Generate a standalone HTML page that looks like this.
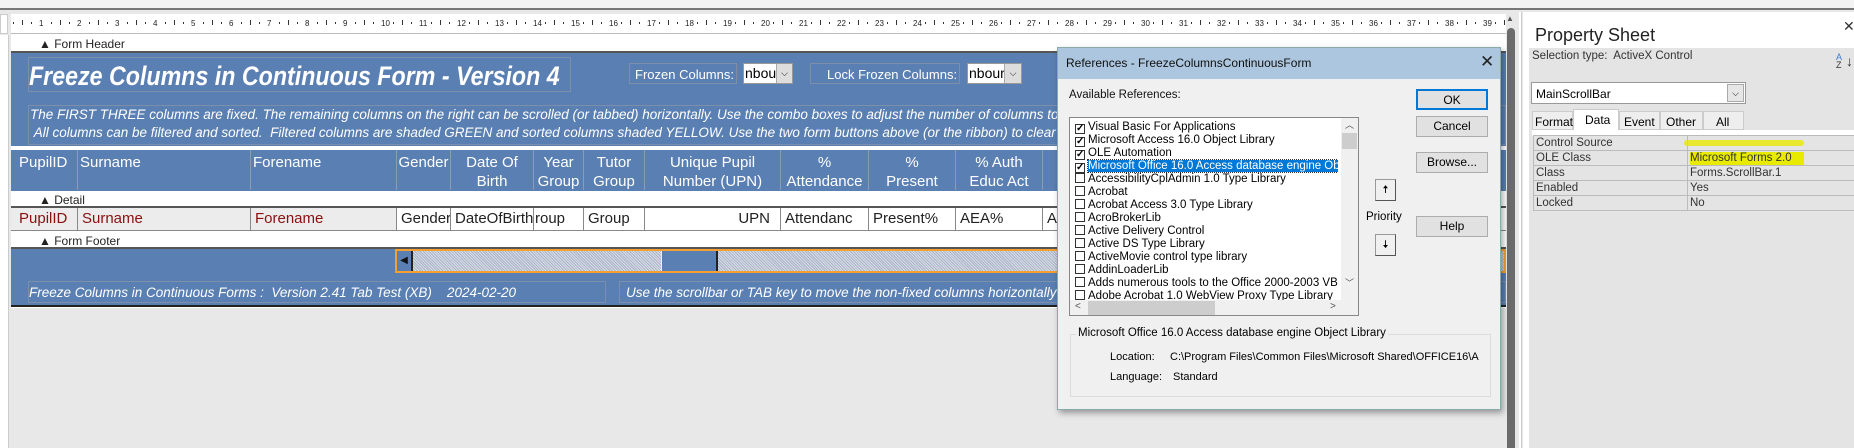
<!DOCTYPE html>
<html><head><meta charset="utf-8"><style>
*{margin:0;padding:0;box-sizing:border-box}
body{width:1854px;height:448px;overflow:hidden;background:#e8e8e8;font-family:"Liberation Sans",sans-serif;position:relative}
.a{position:absolute}
.blue{background:#5a7fb2}
.bar{background:#fff;border-bottom:2px solid #555;font-size:12px;color:#222;padding:3px 0 0 28px}
.ch{position:absolute;top:0;height:40px;border-right:1px solid #8a9bb5;color:#fff;font-size:15px;text-align:center;line-height:19px;padding-top:3px}
.dc{position:absolute;top:0;height:22px;border-right:1px solid #888;font-size:15px;line-height:21px;padding-left:4px;background:#fff;color:#222;white-space:nowrap;overflow:hidden}
.fx{background:#ececec;color:#8b1010}
.it{font-style:italic;color:#fff}
.btn{position:absolute;left:1416px;width:72px;height:21px;background:#e1e1e1;border:1px solid #adadad;font-size:12px;text-align:center;line-height:19px;color:#000}
.li{height:13px;font-size:11.5px;line-height:13px;white-space:nowrap;padding-left:2px;position:relative}
.cb{display:inline-block;width:10px;height:10px;border:1px solid #333;vertical-align:-1px;margin-right:3px;font-size:10px;line-height:8px;text-align:center;font-weight:bold;background:#fff}
.pr td{border:1px solid #bbb;font-size:11.5px;height:15px;padding-left:2px;color:#333}
.lb{white-space:nowrap}
</style></head><body>
<div class="a" style="left:0;top:0;width:1854px;height:10px;background:#f3f3f3;border-bottom:2px solid #777"></div>
<div class="a" style="left:0;top:14px;width:8px;height:20px;background:#fff;border:1px solid #ccc"></div>
<div class="a" style="left:11px;top:14px;width:1495px;height:20px;background:#fff;border-bottom:1px solid #bbb;font-size:8px;color:#222;white-space:nowrap;overflow:hidden" id="r"></div>
<div class="a" style="left:0;top:35px;width:9px;height:413px;background:#fff;border-right:1px solid #ccc"></div>
<div class="a" style="left:11px;top:34px;width:1495px;height:274px;background:#fff"></div>
<div class="a bar" style="left:11px;top:34px;width:1495px;height:19px">▲ Form Header</div>
<div class="a blue" style="left:11px;top:53px;width:1495px;height:93px"></div>
<div class="a" style="left:28px;top:57px;width:543px;height:35px;border:1px solid #7d8fa8"></div>
<div class="a" style="left:29px;top:58px;font:bold italic 27px 'Liberation Sans',sans-serif;color:#fff;white-space:nowrap;transform:scaleX(0.86);transform-origin:0 0;padding-top:3px">Freeze Columns in Continuous Form - Version 4</div>
<div class="a lb" style="left:629px;top:63px;width:108px;height:21px;border:1px solid #7d8fa8;color:#fff;font-size:13px;padding:3px 0 0 5px">Frozen Columns:</div>
<div class="a" style="left:743px;top:63px;width:50px;height:21px;background:#fff;border:1px solid #999;font-size:14px;padding:1px 0 0 1px;overflow:hidden">nbour<span class="a" style="right:0;top:0;width:16px;height:19px;background:#ddd;border-left:1px solid #aaa;font-size:9px;text-align:center;line-height:18px">⌵</span></div>
<div class="a lb" style="left:810px;top:63px;width:150px;height:21px;border:1px solid #7d8fa8;color:#fff;font-size:13px;padding:3px 0 0 16px">Lock Frozen Columns:</div>
<div class="a" style="left:967px;top:63px;width:55px;height:21px;background:#fff;border:1px solid #999;font-size:14px;padding:1px 0 0 1px;overflow:hidden">nbour<span class="a" style="right:0;top:0;width:17px;height:19px;background:#ddd;border-left:1px solid #aaa;font-size:9px;text-align:center;line-height:18px">⌵</span></div>
<div class="a it" style="left:28px;top:105px;width:1478px;height:40px;border:1px solid #7d8fa8;font-size:13.5px;line-height:18px;padding:0 0 0 1px;white-space:nowrap;overflow:hidden">The FIRST THREE columns are fixed. The remaining columns on the right can be scrolled (or tabbed) horizontally. Use the combo boxes to adjust the number of columns to<br>&nbsp;All columns can be filtered and sorted.&nbsp; Filtered columns are shaded GREEN and sorted columns shaded YELLOW. Use the two form buttons above (or the ribbon) to clear t</div>
<div class="a" style="left:11px;top:146px;width:1495px;height:4px;background:#fff"></div>
<div class="a blue" style="left:11px;top:150px;width:1495px;height:41px">
<div class="ch" style="left:0;width:67px;text-align:left;padding-left:8px">PupilID</div>
<div class="ch" style="left:67px;width:173px;text-align:left;padding-left:2px">Surname</div>
<div class="ch" style="left:240px;width:146px;text-align:left;padding-left:2px">Forename</div>
<div class="ch" style="left:386px;width:54px">Gender</div>
<div class="ch" style="left:440px;width:83px">Date Of<br>Birth</div>
<div class="ch" style="left:523px;width:50px">Year<br>Group</div>
<div class="ch" style="left:573px;width:61px">Tutor<br>Group</div>
<div class="ch" style="left:634px;width:136px">Unique Pupil<br>Number (UPN)</div>
<div class="ch" style="left:770px;width:88px">%<br>Attendance</div>
<div class="ch" style="left:858px;width:87px">%<br>Present</div>
<div class="ch" style="left:945px;width:87px">% Auth<br>Educ Act</div>
</div>
<div class="a bar" style="left:11px;top:191px;width:1495px;height:17px;padding-top:2px">▲ Detail</div>
<div class="a" style="left:11px;top:208px;width:1495px;height:23px;border-bottom:1px solid #888;background:#fff">
<div class="dc fx" style="left:0;width:67px;padding-left:8px">PupilID</div>
<div class="dc fx" style="left:67px;width:173px">Surname</div>
<div class="dc fx" style="left:240px;width:146px">Forename</div>
<div class="dc" style="left:386px;width:54px">Gender</div>
<div class="dc" style="left:440px;width:83px">DateOfBirth</div>
<div class="dc" style="left:523px;width:50px;padding-left:1px">roup</div>
<div class="dc" style="left:573px;width:61px">Group</div>
<div class="dc" style="left:634px;width:136px;text-align:right;padding-right:10px">UPN</div>
<div class="dc" style="left:770px;width:88px">Attendanc</div>
<div class="dc" style="left:858px;width:87px">Present%</div>
<div class="dc" style="left:945px;width:87px">AEA%</div>
<div class="dc" style="left:1032px;width:40px">Au</div>
</div>
<div class="a bar" style="left:11px;top:232px;width:1495px;height:17px;padding-top:2px">▲ Form Footer</div>
<div class="a blue" style="left:11px;top:249px;width:1495px;height:58px;border-bottom:2px solid #222"></div>
<div class="a" style="left:395px;top:249px;width:1111px;height:24px;border:2px solid #f5a030;background:repeating-linear-gradient(45deg,#a8b4c8 0 1px,#d8dde6 1px 2px)"></div>
<div class="a" style="left:397px;top:251px;width:16px;height:20px;background:#5a7fb2;border-right:2px solid #222;color:#111;font-size:10px;line-height:20px;text-align:center">◀</div>
<div class="a" style="left:661px;top:251px;width:57px;height:20px;background:#5a7fb2;border-left:1px solid #eee;border-right:2px solid #222"></div>
<div class="a it" style="left:28px;top:281px;width:578px;height:22px;border:1px solid #7d8fa8;font-size:13.5px;padding-top:3px;white-space:nowrap">Freeze Columns in Continuous Forms :&nbsp; Version 2.41 Tab Test (XB)&nbsp;&nbsp;&nbsp; 2024-02-20</div>
<div class="a it" style="left:619px;top:281px;width:887px;height:22px;border:1px solid #7d8fa8;font-size:13.5px;padding:3px 0 0 6px;white-space:nowrap">Use the scrollbar or TAB key to move the non-fixed columns horizontally</div>
<div class="a" style="left:1506px;top:12px;width:12px;height:436px;background:#e8e8e8"></div>
<div class="a" style="left:1507px;top:28px;width:8px;height:420px;background:#6b6b6b;border-radius:4px 4px 0 0"></div>
<div class="a" style="left:1506px;top:14px;font-size:8px;color:#555">▲</div>
<div class="a" style="left:1519px;top:12px;width:3px;height:436px;background:#fff;border-right:1px solid #ccc"></div>
<div class="a" style="left:1523px;top:12px;width:331px;height:436px;background:#fff"></div>
<div class="a" style="left:1535px;top:25px;font-size:18px;color:#222">Property Sheet</div>
<div class="a" style="left:1843px;top:18px;font-size:14px;color:#333">✕</div>
<div class="a" style="left:1529px;top:48px;width:325px;height:400px;background:#e4e4e4"></div>
<div class="a" style="left:1532px;top:50px;font-size:11.5px;color:#333">Selection type:&nbsp; ActiveX Control</div>
<div class="a" style="left:1836px;top:53px;font-size:9px;line-height:8px;color:#333"><span style="color:#3a7bd5">A</span><br>Z</div>
<div class="a" style="left:1846px;top:53px;font-size:14px;color:#333">↓</div>
<div class="a" style="left:1531px;top:82px;width:215px;height:22px;background:#fff;border:1px solid #999;font-size:12px;padding:4px 0 0 4px">MainScrollBar<span class="a" style="right:1px;top:1px;width:17px;height:18px;background:#e6e6e6;border:1px solid #aaa;font-size:9px;text-align:center;line-height:16px">⌵</span></div>
<div class="a" style="left:1532px;top:111px;width:41px;height:19px;background:#eee;border:1px solid #ccc;font-size:12px;padding:3px 0 0 2px">Format</div>
<div class="a" style="left:1573px;top:109px;width:46px;height:21px;background:#fff;border:1px solid #ccc;border-bottom:none;font-size:12px;padding:3px 0 0 11px">Data</div>
<div class="a" style="left:1619px;top:111px;width:41px;height:19px;background:#eee;border:1px solid #ccc;font-size:12px;padding:3px 0 0 4px">Event</div>
<div class="a" style="left:1660px;top:111px;width:43px;height:19px;background:#eee;border:1px solid #ccc;font-size:12px;padding:3px 0 0 5px">Other</div>
<div class="a" style="left:1703px;top:111px;width:41px;height:19px;background:#eee;border:1px solid #ccc;font-size:12px;padding:3px 0 0 12px">All</div>
<div class="a" style="left:1532px;top:130px;width:322px;height:6px;background:#fff"></div>
<table class="a pr" style="left:1533px;top:135px;width:325px;border-collapse:collapse;background:#e4e4e4">
<tr><td style="width:154px">Control Source</td><td></td></tr>
<tr><td>OLE Class</td><td><span style="background:#e8ea00;padding:0 12px 1px 0">Microsoft Forms 2.0</span></td></tr>
<tr><td>Class</td><td>Forms.ScrollBar.1</td></tr>
<tr><td>Enabled</td><td>Yes</td></tr>
<tr><td>Locked</td><td>No</td></tr>
</table>
<div class="a" style="left:1684px;top:140px;width:120px;height:6px;background:#e8ea00;border-radius:3px;opacity:.8"></div>
<div class="a" style="left:1057px;top:47px;width:444px;height:363px;background:#f0f0f0;border:1px solid #8aa;box-shadow:2px 3px 6px rgba(0,0,0,.35)"></div>
<div class="a" style="left:1058px;top:48px;width:442px;height:31px;background:#abc6de"></div>
<div class="a" style="left:1066px;top:56px;font-size:12px;color:#111">References - FreezeColumnsContinuousForm</div>
<div class="a" style="left:1480px;top:52px;font-size:17px;color:#222">✕</div>
<div class="a" style="left:1069px;top:89px;font-size:11.5px;color:#111">Available References:</div>
<div class="a" style="left:1069px;top:117px;width:290px;height:199px;background:#fff;border:1px solid #888;overflow:hidden">
<div style="padding:3px 0 0 3px;width:268px;overflow:hidden">
<div class="li"><span class="cb">✓</span>Visual Basic For Applications</div>
<div class="li"><span class="cb">✓</span>Microsoft Access 16.0 Object Library</div>
<div class="li"><span class="cb">✓</span>OLE Automation</div>
<div class="li"><span class="cb">✓</span><span style="background:#0078d7;color:#fff;outline:1px dotted #333;padding-right:2px">Microsoft Office 16.0 Access database engine Objec</span></div>
<div class="li"><span class="cb"></span>AccessibilityCplAdmin 1.0 Type Library</div>
<div class="li"><span class="cb"></span>Acrobat</div>
<div class="li"><span class="cb"></span>Acrobat Access 3.0 Type Library</div>
<div class="li"><span class="cb"></span>AcroBrokerLib</div>
<div class="li"><span class="cb"></span>Active Delivery Control</div>
<div class="li"><span class="cb"></span>Active DS Type Library</div>
<div class="li"><span class="cb"></span>ActiveMovie control type library</div>
<div class="li"><span class="cb"></span>AddinLoaderLib</div>
<div class="li"><span class="cb"></span>Adds numerous tools to the Office 2000-2003 VBE</div>
<div class="li"><span class="cb"></span>Adobe Acrobat 1.0 WebView Proxy Type Library</div>
</div>
<div class="a" style="left:271px;top:0;width:17px;height:182px;background:#f0f0f0;font-size:9px;color:#555;text-align:center">︿<div style="height:16px;background:#cdcdcd;margin:2px 1px"></div><div style="margin-top:127px">﹀</div></div>
<div class="a" style="left:0;top:182px;width:288px;height:16px;background:#f0f0f0;font-size:10px;color:#555"><span class="a" style="left:5px;top:1px">&lt;</span><div class="a" style="left:18px;top:1px;width:127px;height:14px;background:#cdcdcd"></div><span class="a" style="left:260px;top:1px">&gt;</span></div>
</div>
<div class="btn" style="top:89px;border:2px solid #0078d7">OK</div>
<div class="btn" style="top:116px">Cancel</div>
<div class="btn" style="top:152px">Browse...</div>
<div class="btn" style="top:216px">Help</div>
<div class="a" style="left:1375px;top:179px;width:21px;height:22px;background:#f0f0f0;border:1px solid #999;border-right-color:#555;border-bottom-color:#555;font-size:11px;text-align:center;line-height:20px">🠅</div>
<div class="a" style="left:1366px;top:211px;font-size:11.5px">Priority</div>
<div class="a" style="left:1375px;top:234px;width:21px;height:22px;background:#f0f0f0;border:1px solid #999;border-right-color:#555;border-bottom-color:#555;font-size:11px;text-align:center;line-height:20px">🠇</div>
<div class="a" style="left:1070px;top:334px;width:421px;height:63px;border:1px solid #dcdcdc"></div>
<div class="a" style="left:1076px;top:327px;font-size:11.5px;background:#f0f0f0;padding:0 2px">Microsoft Office 16.0 Access database engine Object Library</div>
<div class="a" style="left:1110px;top:351px;font-size:11px">Location:</div>
<div class="a" style="left:1170px;top:351px;font-size:11px;white-space:nowrap">C:\Program Files\Common Files\Microsoft Shared\OFFICE16\A</div>
<div class="a" style="left:1110px;top:371px;font-size:11px">Language:</div>
<div class="a" style="left:1173px;top:371px;font-size:11px">Standard</div>
<script>
var r=document.getElementById('r'),h='';
for(var i=0;i<40;i++){var x=i*38-8;
if(i>0)h+='<span class="a" style="left:'+(x-2)+'px;top:5px">'+i+'</span>';
h+='<span class="a" style="left:'+(x+10)+'px;top:8px;width:1px;height:2px;background:#333"></span><span class="a" style="left:'+(x+19)+'px;top:6px;width:1px;height:5px;background:#333"></span><span class="a" style="left:'+(x+28)+'px;top:8px;width:1px;height:2px;background:#333"></span>';}
r.innerHTML=h;
</script>
</body></html>
